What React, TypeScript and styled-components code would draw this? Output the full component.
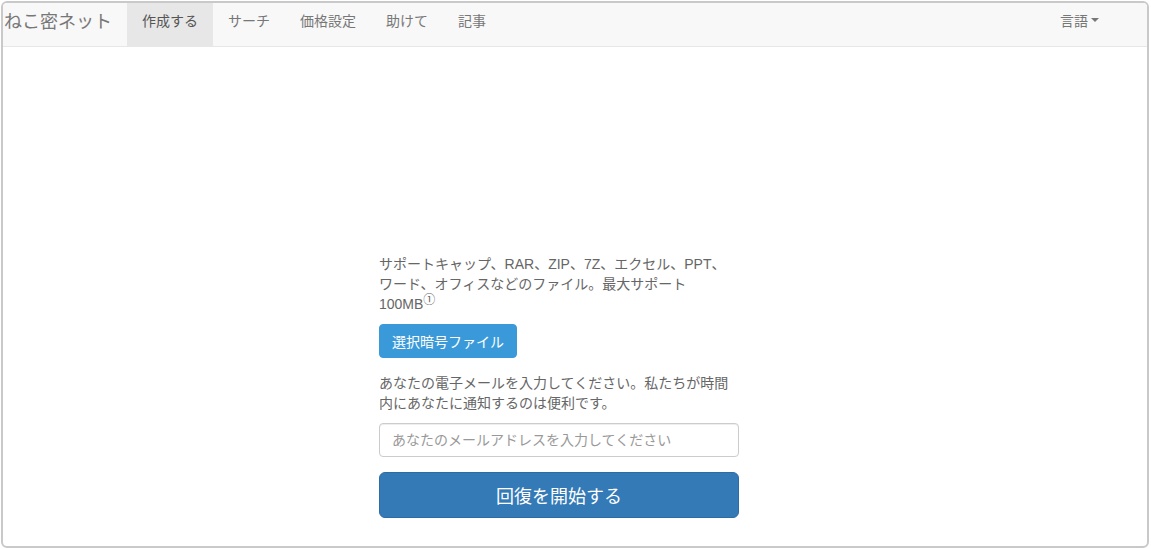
import styled, { createGlobalStyle } from "styled-components";

const GlobalStyle = createGlobalStyle`
    html, body {
        margin: 0;
        padding: 0;
        background: #fff;
    }
    body {
        font-family: "Liberation Sans", Arial, "Noto Sans CJK JP", sans-serif;
        font-size: 14px;
        color: #555;
    }
    * {
        box-sizing: border-box;
    }
`;

const Frame = styled.div`
    margin: 1px 2px 1px 1px;
    height: 547px;
    border: 2px solid #c9c9c9;
    border-radius: 6px;
    overflow: hidden;
    display: flex;
    flex-direction: column;
`;

const Navbar = styled.nav`
    display: flex;
    align-items: stretch;
    height: 44px;
    background: #f8f8f8;
    border-bottom: 1px solid #e7e7e7;
    padding: 0 33px 0 1px;
`;

const Brand = styled.a`
    display: flex;
    align-items: center;
    padding: 0 15px 9px 0;
    font-size: 18px;
    color: #777;
    text-decoration: none;
`;

const NavList = styled.ul`
    display: flex;
    margin: 0;
    padding: 0;
    list-style: none;
`;

const NavItem = styled.li<{ active?: boolean }>`
    display: flex;
    align-items: center;
    padding: 0 15px 9px;
    font-size: 14px;
    color: ${p => (p.active ? "#555" : "#777")};
    background: ${p => (p.active ? "#e7e7e7" : "transparent")};
`;

const Spacer = styled.div`
    flex: 1;
`;

const Caret = styled.span`
    display: inline-block;
    width: 0;
    height: 0;
    margin-left: 3px;
    border-top: 4px solid #777;
    border-left: 4px solid transparent;
    border-right: 4px solid transparent;
    vertical-align: middle;
`;

const Main = styled.main`
    flex: 1;
    display: flex;
    padding: 207px 0 0 376px;
`;

const Column = styled.div`
    width: 360px;
    display: flex;
    flex-direction: column;
    align-items: flex-start;
`;

const Help = styled.p<{ gap: number }>`
    margin: 0 0 ${p => p.gap}px;
    line-height: 20px;
    color: #666;
    width: 100%;
`;

const Sup = styled.sup`
    font-size: 12px;
    line-height: 0;
    vertical-align: baseline;
    position: relative;
    top: -5px;
`;

const FileButton = styled.button`
    height: 34px;
    padding: 0 12px;
    margin-bottom: 15px;
    font: inherit;
    font-size: 14px;
    color: #fff;
    background: #3a9ad9;
    border: 1px solid #3a9ad9;
    border-radius: 4px;
`;

const EmailInput = styled.input`
    width: 100%;
    height: 34px;
    padding: 6px 12px;
    margin-bottom: 15px;
    font: inherit;
    font-size: 14px;
    color: #555;
    border: 1px solid #ccc;
    border-radius: 4px;
    box-shadow: inset 0 1px 1px rgba(0, 0, 0, 0.075);

    &::placeholder {
        color: #999;
    }
`;

const StartButton = styled.button`
    width: 100%;
    height: 46px;
    font: inherit;
    font-size: 18px;
    color: #fff;
    background: #337ab7;
    border: 1px solid #2e6da4;
    border-radius: 6px;
`;

export default function App() {
    return (
        <>
            <GlobalStyle />
            <Frame>
                <Navbar>
                    <Brand href="#">ねこ密ネット</Brand>
                    <NavList>
                        <NavItem active>作成する</NavItem>
                        <NavItem>サーチ</NavItem>
                        <NavItem>価格設定</NavItem>
                        <NavItem>助けて</NavItem>
                        <NavItem>記事</NavItem>
                    </NavList>
                    <Spacer />
                    <NavList>
                        <NavItem>
                            言語<Caret />
                        </NavItem>
                    </NavList>
                </Navbar>
                <Main>
                    <Column>
                        <Help gap={10}>
                            サポートキャップ、RAR、ZIP、7Z、エクセル、PPT、ワード、オフィスなどのファイル。最大サポート100MB<Sup>①</Sup>
                        </Help>
                        <FileButton>選択暗号ファイル</FileButton>
                        <Help gap={10}>
                            あなたの電子メールを入力してください。私たちが時間内にあなたに通知するのは便利です。
                        </Help>
                        <EmailInput placeholder="あなたのメールアドレスを入力してください" />
                        <StartButton>回復を開始する</StartButton>
                    </Column>
                </Main>
            </Frame>
        </>
    );
}
